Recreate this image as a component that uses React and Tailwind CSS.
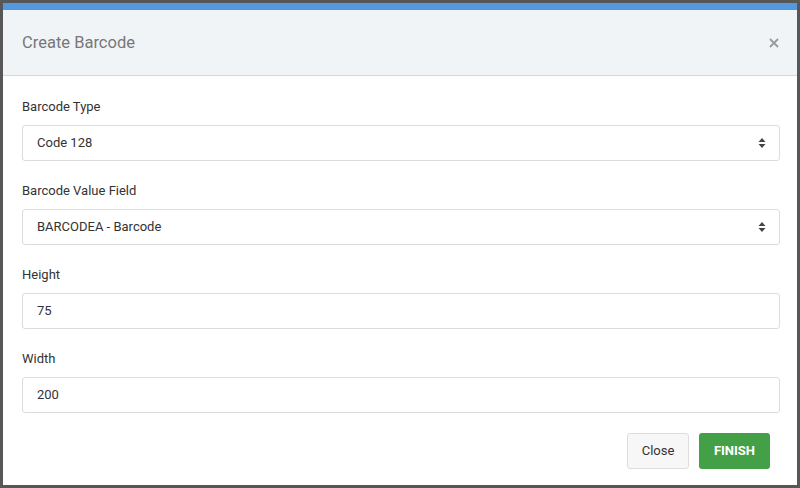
import React from 'react'

function Arrows() {
  return (
    <svg width="8" height="12" viewBox="0 0 8 12" className="text-[#444]">
      <path d="M4 1 L7.5 5 L0.5 5 Z" fill="currentColor" />
      <path d="M4 11 L7.5 7 L0.5 7 Z" fill="currentColor" />
    </svg>
  )
}

function Field({ label, value, select }) {
  return (
    <div className="mb-[20px]">
      <div className="h-5 leading-5 text-[13px] text-[#333] mb-[8px]">{label}</div>
      <div className="h-9 border border-[#dcdcdc] rounded-[3px] flex items-center justify-between pl-[14px] pr-[13px] text-[13px] text-[#333]">
        <span>{value}</span>
        {select && <Arrows />}
      </div>
    </div>
  )
}

export default function App() {
  return (
    <div
      className="w-[800px] h-[488px] border-[3px] border-[#575757] bg-white flex flex-col overflow-hidden"
      style={{ fontFamily: 'Roboto, "Liberation Sans", sans-serif' }}
    >
      <div className="h-[7px] bg-[#5499e0]" />
      <div className="h-[66px] bg-[#f1f4f7] border-b border-[#d3d8dd] flex items-center justify-between pl-[19px] pr-[17px]">
        <h2 className="text-[16.5px] text-[#777] pt-[1px]">Create Barcode</h2>
        <svg width="10" height="10" viewBox="0 0 10 10" className="mr-[1px]">
          <path d="M1 1 L9 9 M9 1 L1 9" stroke="#9a9a9a" strokeWidth="1.8" />
        </svg>
      </div>
      <div className="pt-[21px] pl-[19px] pr-[17px]">
        <Field label="Barcode Type" value="Code 128" select />
        <Field label="Barcode Value Field" value="BARCODEA - Barcode" select />
        <Field label="Height" value="75" />
        <Field label="Width" value="200" />
      </div>
      <div className="flex justify-end gap-[10px] pr-[27px]">
        <button className="h-[36px] w-[62px] bg-[#f7f7f7] border border-[#dddddd] rounded-[3px] text-[13px] text-[#333]">
          Close
        </button>
        <button className="h-[36px] w-[71px] bg-[#43a047] rounded-[3px] text-[13px] font-bold text-white">
          FINISH
        </button>
      </div>
    </div>
  )
}
